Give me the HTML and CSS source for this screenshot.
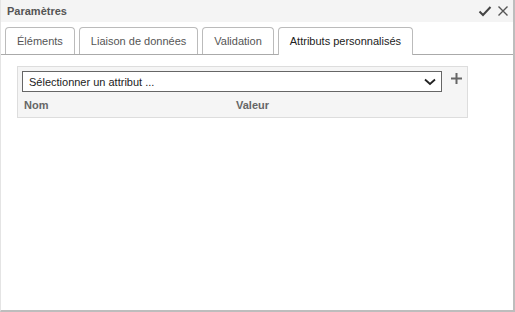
FILE: index.html
```html
<!DOCTYPE html>
<html lang="fr">
<head>
  <meta charset="UTF-8">
  <title>Paramètres</title>
  <link rel="stylesheet" href="styles.css">
</head>
<body>
  <div class="dialog">
    <div class="titlebar">
      <span class="title">Paramètres</span>
      <span class="actions">
        <svg width="14" height="12" viewBox="0 0 14 12"><path d="M1.5 6.5 L5 10 L12.5 2" fill="none" stroke="#444" stroke-width="2"/></svg>
        <svg width="12" height="12" viewBox="0 0 12 12"><path d="M1.5 1.5 L10.5 10.5 M10.5 1.5 L1.5 10.5" fill="none" stroke="#555" stroke-width="1.4"/></svg>
      </span>
    </div>

    <div class="tabs">
      <div class="tab">Éléments</div>
      <div class="tab">Liaison de données</div>
      <div class="tab">Validation</div>
      <div class="tab active">Attributs personnalisés</div>
    </div>

    <div class="content">
      <div class="attr-panel">
        <div class="attr-row">
          <div class="select">
            <span>Sélectionner un attribut ...</span>
            <svg width="12" height="8" viewBox="0 0 12 8"><path d="M1 1.5 L6 6 L11 1.5" fill="none" stroke="#222" stroke-width="1.8"/></svg>
          </div>
          <svg class="add" width="11" height="11" viewBox="0 0 11 11"><path d="M5.5 0 V11 M0 5.5 H11" stroke="#666" stroke-width="2"/></svg>
        </div>
        <div class="attr-head">
          <span class="col-name">Nom</span>
          <span class="col-value">Valeur</span>
        </div>
      </div>
    </div>
  </div>
</body>
</html>
```

FILE: styles.css
```css
html, body { margin: 0; padding: 0; }
body { font-family: "Liberation Sans", Arial, sans-serif; font-size: 11px; color: #333; background: #fff; }

.dialog { width: 515px; height: 312px; box-sizing: border-box; border-left: 1px solid #e4e4e4; border-right: 2px solid #bdbdbd; border-bottom: 2px solid #bdbdbd; display: flex; flex-direction: column; }

.titlebar { height: 22px; background: #f4f4f4; display: flex; align-items: center; justify-content: space-between; padding: 0 4px 0 6px; }
.title { font-weight: bold; color: #555; }
.actions { display: flex; gap: 5px; align-items: center; }

.tabs { display: flex; gap: 4px; padding: 5px 0 0 4px; border-bottom: 1px solid #aaa; height: 27px; align-items: flex-end; }
.tab { height: 26px; line-height: 27px; padding: 0 11px; border: 1px solid #bbb; border-bottom: none; border-radius: 4px 4px 0 0; color: #555; background: #fff; }
.tab.active { color: #222; height: 27px; margin-bottom: -1px; }

.content { flex: 1; padding: 11px 0 0 16px; }
.attr-panel { width: 451px; height: 52px; box-sizing: border-box; background: #f5f5f5; border: 1px solid #ddd; padding: 4px 0 0 4px; }
.attr-row { display: flex; align-items: center; gap: 9px; }
.select { width: 420px; height: 21px; box-sizing: border-box; border: 1px solid #666; background: #fff; display: flex; align-items: center; justify-content: space-between; padding: 0 5px 0 6px; color: #222; }
.add { margin-top: -6px; }
.attr-head { display: flex; margin-top: 7px; padding-left: 2px; font-weight: bold; color: #666; }
.col-name { width: 212px; }
```
